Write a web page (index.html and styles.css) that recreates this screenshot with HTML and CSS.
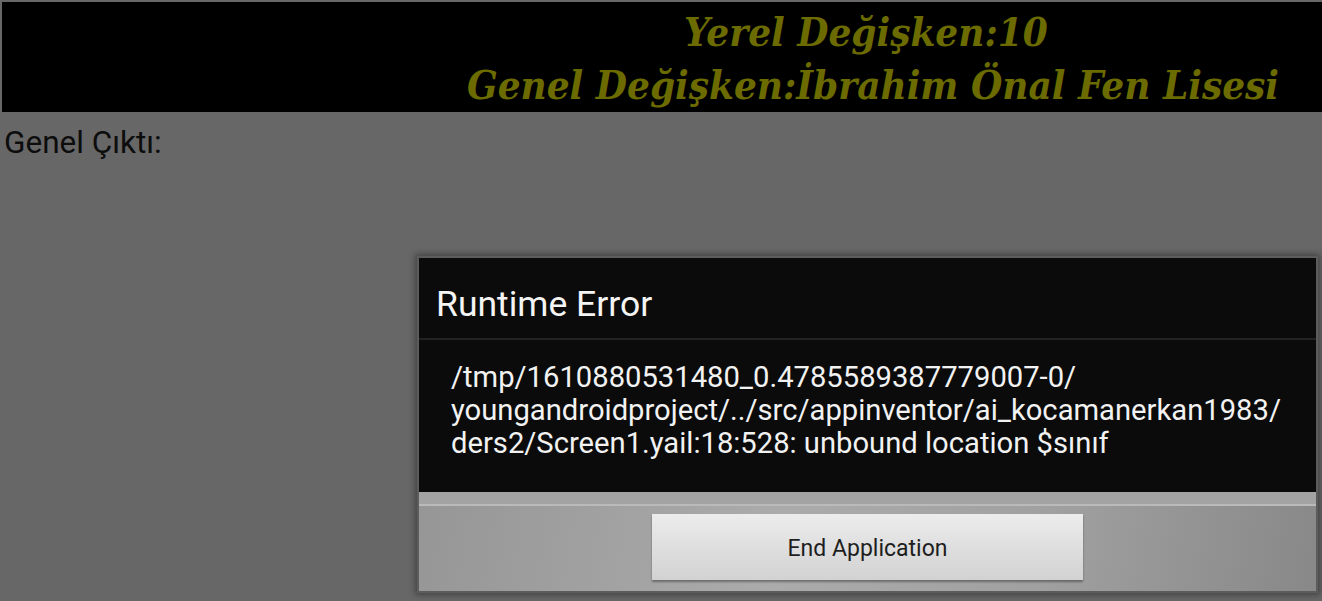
FILE: index.html
```html
<!DOCTYPE html>
<html lang="tr">
<head>
<meta charset="utf-8">
<title>Runtime Error</title>
<link rel="stylesheet" href="styles.css">
</head>
<body>
<div class="screen">
  <header class="banner">
    <div class="banner-text"><span class="banner-line-first">Yerel Değişken:10</span><br>Genel Değişken:İbrahim Önal Fen Lisesi</div>
  </header>
  <div class="output">Genel Çıktı:</div>

  <div class="dialog">
    <div class="dialog-title">Runtime Error</div>
    <div class="dialog-message">/tmp/1610880531480_0.4785589387779007-0/<br>youngandroidproject/../src/appinventor/ai_kocamanerkan1983/<br>ders2/Screen1.yail:18:528: unbound location $sınıf</div>
    <div class="dialog-buttons">
      <div class="button">End Application</div>
    </div>
  </div>
</div>
</body>
</html>
```

FILE: styles.css
```css
html, body {
  margin: 0;
  padding: 0;
}
body {
  background: #676767;
  width: 1322px;
  height: 601px;
  overflow: hidden;
}
.screen {
  position: relative;
  width: 1322px;
  height: 601px;
  padding: 2px 0 0 2px;
  box-sizing: border-box;
}
.banner {
  background: #000;
  height: 110px;
  display: flex;
  justify-content: flex-end;
  padding: 3px 43px 0 0;
  box-sizing: border-box;
}
.banner-text {
  font-family: "DejaVu Serif Condensed", "DejaVu Serif", serif;
  font-weight: bold;
  font-style: italic;
  font-size: 40px;
  line-height: 53px;
  color: #6b6b00;
  text-align: center;
  white-space: nowrap;
}
.banner-line-first {
  padding-right: 14px;
}
.output {
  font-family: Roboto, "Noto Sans", sans-serif;
  font-size: 31.5px;
  color: #0d0d0d;
  padding: 13px 0 0 2px;
  line-height: 36px;
}
.dialog {
  position: absolute;
  left: 417px;
  top: 256px;
  width: 901px;
  height: 337px;
  box-sizing: border-box;
  border: 2px solid #5c5c5c;
  box-shadow: 0 0 6px 2px rgba(0, 0, 0, 0.35);
  display: flex;
  flex-direction: column;
  background: #0b0b0b;
}
.dialog-title {
  height: 82px;
  box-sizing: border-box;
  padding: 26px 0 0 17px;
  font-family: Roboto, "Noto Sans", sans-serif;
  font-size: 35.5px;
  line-height: 40px;
  color: #f4f4f4;
  border-bottom: 2px solid #222;
}
.dialog-message {
  height: 152px;
  box-sizing: border-box;
  padding: 21px 0 0 32px;
  font-family: Roboto, "Noto Sans", sans-serif;
  font-size: 29.2px;
  line-height: 33px;
  color: #f2f2f2;
}
.dialog-buttons {
  flex: 1;
  background:
    linear-gradient(to bottom, #a3a3a3 0, #a3a3a3 12px, #bababa 12px, #bababa 14px, transparent 14px),
    linear-gradient(100deg, #969696 0%, #ababab 40%, #a0a0a0 70%, #888 100%);
  display: flex;
  justify-content: center;
  align-items: flex-start;
  padding-top: 22px;
  box-sizing: border-box;
}
.button {
  width: 431px;
  height: 66px;
  background: linear-gradient(to bottom, #ececec, #d2d2d2);
  box-shadow: 0 2px 2px rgba(0, 0, 0, 0.35);
  display: flex;
  align-items: center;
  justify-content: center;
  font-family: Roboto, "Noto Sans", sans-serif;
  font-size: 23px;
  color: #1e1e1e;
  padding-top: 2px;
  box-sizing: border-box;
}
```
